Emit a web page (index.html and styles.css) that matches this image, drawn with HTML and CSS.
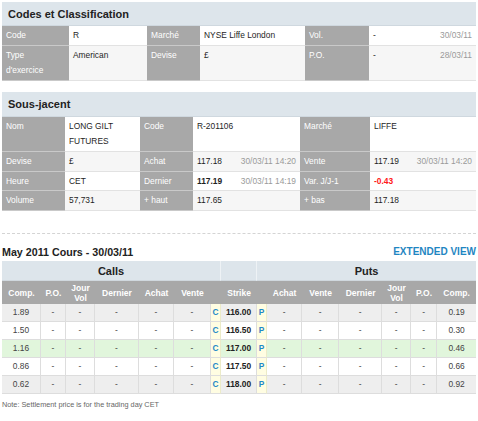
FILE: index.html
```html
<!DOCTYPE html>
<html lang="fr">
<head>
<meta charset="utf-8">
<title>Codes et Classification</title>
<link rel="stylesheet" href="styles.css">
</head>
<body>
<div class="page">
  <section class="block">
    <h2 class="block-title">Codes et Classification</h2>
    <table class="info info-1">
      <colgroup><col><col><col><col><col><col></colgroup>
      <tr class="r-white">
        <td class="lbl">Code</td><td>R</td>
        <td class="lbl">Marché</td><td>NYSE Liffe London</td>
        <td class="lbl">Vol.</td><td><div class="split"><span>-</span><span class="date">30/03/11</span></div></td>
      </tr>
      <tr class="r-grey">
        <td class="lbl">Type<br>d'exercice</td><td>American</td>
        <td class="lbl">Devise</td><td>£</td>
        <td class="lbl">P.O.</td><td><div class="split"><span>-</span><span class="date">28/03/11</span></div></td>
      </tr>
    </table>
  </section>

  <section class="block block-2">
    <h2 class="block-title">Sous-jacent</h2>
    <table class="info info-2">
      <colgroup><col><col><col><col><col><col></colgroup>
      <tr class="r-white">
        <td class="lbl">Nom</td><td>LONG GILT FUTURES</td>
        <td class="lbl">Code</td><td>R-201106</td>
        <td class="lbl">Marché</td><td>LIFFE</td>
      </tr>
      <tr class="r-grey">
        <td class="lbl">Devise</td><td>£</td>
        <td class="lbl">Achat</td><td><div class="split"><span>117.18</span><span class="date">30/03/11 14:20</span></div></td>
        <td class="lbl">Vente</td><td><div class="split"><span>117.19</span><span class="date">30/03/11 14:20</span></div></td>
      </tr>
      <tr class="r-white r-short">
        <td class="lbl">Heure</td><td>CET</td>
        <td class="lbl">Dernier</td><td><div class="split"><span class="strong">117.19</span><span class="date">30/03/11 14:19</span></div></td>
        <td class="lbl">Var. J/J-1</td><td><span class="neg">-0.43</span></td>
      </tr>
      <tr class="r-grey">
        <td class="lbl">Volume</td><td>57,731</td>
        <td class="lbl">+ haut</td><td>117.65</td>
        <td class="lbl">+ bas</td><td>117.18</td>
      </tr>
    </table>
  </section>

  <section class="options">
    <div class="options-head">
      <h3 class="options-title">May 2011 Cours - 30/03/11</h3>
      <a class="ext-link" href="#">EXTENDED VIEW</a>
    </div>
    <table class="chain">
      <colgroup><col><col><col><col><col><col><col><col><col><col><col><col><col><col><col></colgroup>
      <thead>
        <tr class="grp">
          <th colspan="7">Calls</th><th></th><th colspan="7">Puts</th>
        </tr>
        <tr class="cols">
          <th>Comp.</th><th>P.O.</th><th>Jour<br>Vol</th><th>Dernier</th><th>Achat</th><th>Vente</th><th></th>
          <th>Strike</th>
          <th></th><th>Achat</th><th>Vente</th><th>Dernier</th><th>Jour<br>Vol</th><th>P.O.</th><th>Comp.</th>
        </tr>
      </thead>
      <tbody>
        <tr class="row-grey">
          <td>1.89</td><td>-</td><td>-</td><td>-</td><td>-</td><td>-</td><td class="cp">C</td>
          <td class="strike">116.00</td>
          <td class="cp">P</td><td>-</td><td>-</td><td>-</td><td>-</td><td>-</td><td>0.19</td>
        </tr>
        <tr class="row-white">
          <td>1.50</td><td>-</td><td>-</td><td>-</td><td>-</td><td>-</td><td class="cp">C</td>
          <td class="strike">116.50</td>
          <td class="cp">P</td><td>-</td><td>-</td><td>-</td><td>-</td><td>-</td><td>0.30</td>
        </tr>
        <tr class="row-green">
          <td>1.16</td><td>-</td><td>-</td><td>-</td><td>-</td><td>-</td><td class="cp">C</td>
          <td class="strike">117.00</td>
          <td class="cp">P</td><td>-</td><td>-</td><td>-</td><td>-</td><td>-</td><td>0.46</td>
        </tr>
        <tr class="row-white">
          <td>0.86</td><td>-</td><td>-</td><td>-</td><td>-</td><td>-</td><td class="cp">C</td>
          <td class="strike">117.50</td>
          <td class="cp">P</td><td>-</td><td>-</td><td>-</td><td>-</td><td>-</td><td>0.66</td>
        </tr>
        <tr class="row-grey">
          <td>0.62</td><td>-</td><td>-</td><td>-</td><td>-</td><td>-</td><td class="cp">C</td>
          <td class="strike">118.00</td>
          <td class="cp">P</td><td>-</td><td>-</td><td>-</td><td>-</td><td>-</td><td>0.92</td>
        </tr>
      </tbody>
    </table>
    <p class="note">Note: Settlement price is for the trading day CET</p>
  </section>
</div>
</body>
</html>
```

FILE: styles.css
```css
* { box-sizing: border-box; }

html, body {
  margin: 0;
  padding: 0;
  background: #ffffff;
}

body {
  font-family: "Liberation Sans", Arial, sans-serif;
  color: #333333;
}

.page {
  width: 478px;
  padding: 2px 2px 0 2px;
}

.block-title {
  margin: 0;
  height: 24px;
  line-height: 24px;
  padding: 0 6px;
  background: #dde5eb;
  border-bottom: 1px solid #cfd8df;
  font-size: 11px;
  font-weight: bold;
  color: #222222;
}

.block-2 {
  margin-top: 11px;
}

.block-2 .block-title {
  height: 25px;
  line-height: 25px;
}

.info {
  width: 474px;
  table-layout: fixed;
  border-collapse: separate;
  border-spacing: 0;
  font-size: 8.4px;
}

.info-1 col:nth-child(1) { width: 67px; }
.info-1 col:nth-child(2) { width: 78px; }
.info-1 col:nth-child(3) { width: 53px; }
.info-1 col:nth-child(4) { width: 105px; }
.info-1 col:nth-child(5) { width: 64px; }
.info-1 col:nth-child(6) { width: 107px; }

.info-2 col:nth-child(1) { width: 63px; }
.info-2 col:nth-child(2) { width: 75px; }
.info-2 col:nth-child(3) { width: 53px; }
.info-2 col:nth-child(4) { width: 107px; }
.info-2 col:nth-child(5) { width: 70px; }
.info-2 col:nth-child(6) { width: 106px; }

.info td {
  vertical-align: top;
  padding: 2px 4px 2px 4px;
  line-height: 15px;
  border-bottom: 1px solid #e2e2e2;
  color: #1e1e1e;
}

.info tr.r-short td {
  padding-bottom: 1px;
}

.info td.lbl {
  background: #a8a8a8;
  color: #ffffff;
  border-bottom: 1px solid #c9c9c9;
  padding-left: 4px;
}

.info tr.r-white td:not(.lbl) { background: #ffffff; }
.info tr.r-grey td:not(.lbl) { background: #f6f6f6; }

.split {
  display: flex;
  justify-content: space-between;
}

.date {
  color: #9a9a9a;
}

.strong {
  font-weight: bold;
}

.neg {
  color: #ff1a1a;
  font-weight: bold;
}

.options-head {
  margin-top: 22px;
  border-top: 1px dashed #d4d4d4;
  padding-top: 8px;
  height: 28px;
  display: flex;
  justify-content: space-between;
  align-items: center;
}

.options-title {
  margin: 0;
  font-size: 10.7px;
  font-weight: bold;
  color: #222222;
  line-height: 16px;
}

.ext-link {
  font-size: 10px;
  font-weight: bold;
  color: #1f86c2;
  text-decoration: none;
  line-height: 16px;
}

.chain {
  width: 474px;
  table-layout: fixed;
  border-collapse: separate;
  border-spacing: 0;
  font-size: 8.4px;
}

.chain col:nth-child(1) { width: 39px; }
.chain col:nth-child(2) { width: 25px; }
.chain col:nth-child(3) { width: 29px; }
.chain col:nth-child(4) { width: 44px; }
.chain col:nth-child(5) { width: 35px; }
.chain col:nth-child(6) { width: 37px; }
.chain col:nth-child(7) { width: 10px; }
.chain col:nth-child(8) { width: 36px; }
.chain col:nth-child(9) { width: 10px; }
.chain col:nth-child(10) { width: 35px; }
.chain col:nth-child(11) { width: 37px; }
.chain col:nth-child(12) { width: 43px; }
.chain col:nth-child(13) { width: 29px; }
.chain col:nth-child(14) { width: 26px; }
.chain col:nth-child(15) { width: 39px; }

.chain .grp th {
  height: 20px;
  background: #dde5eb;
  font-size: 11px;
  font-weight: bold;
  color: #222222;
  border-right: 1px solid #eef2f5;
  border-bottom: 1px solid #d0d8de;
  padding: 0;
}

.chain .grp th:last-child { border-right: none; }

.chain .cols th {
  height: 23px;
  background: #a8a8a8;
  color: #ffffff;
  font-size: 8.5px;
  font-weight: bold;
  line-height: 10px;
  padding: 0;
  vertical-align: middle;
}

.chain td {
  height: 18px;
  padding: 0;
  text-align: center;
  vertical-align: middle;
  line-height: 17px;
  color: #444444;
  border-right: 1px solid #dddddd;
  border-bottom: 1px solid #dddddd;
}

.chain td:last-child { border-right: none; }

.chain .row-grey td { background: #eeeeee; }
.chain .row-white td { background: #ffffff; }
.chain .row-green td { background: #e1f6dc; }

.chain td.cp {
  background: #fffde2;
  color: #1f8ac8;
  font-weight: bold;
  border-right: 1px solid #ecebc8;
}

.chain td.strike {
  font-weight: bold;
  color: #222222;
}

.note {
  margin: 6px 0 0 0;
  font-size: 7.3px;
  color: #666666;
  line-height: 10px;
}
```
